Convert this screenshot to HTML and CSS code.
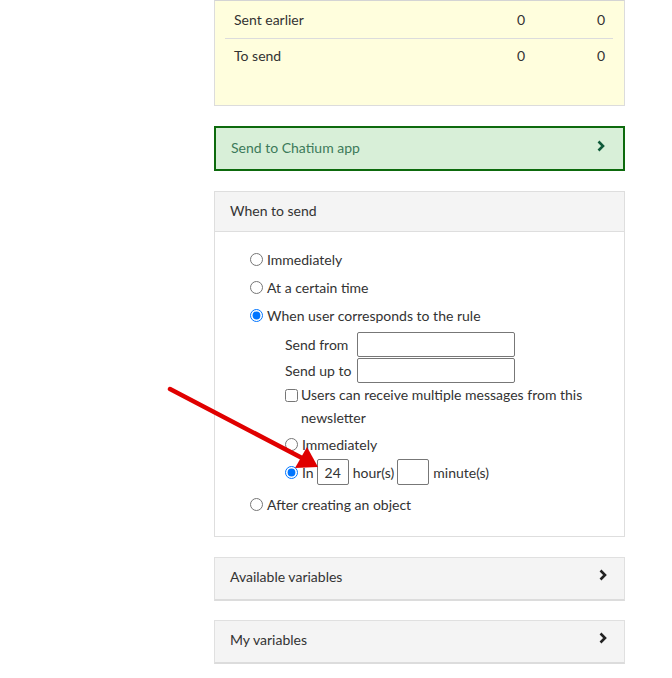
FILE: index.html
```html
<!DOCTYPE html>
<html>
<head>
<meta charset="utf-8">
<link rel="stylesheet" href="styles.css">
</head>
<body>
<div class="column">
  <div class="stats">
    <div class="stat-row"><span class="stat-label">Sent earlier</span><span class="stat-val">0</span><span class="stat-val">0</span></div>
    <div class="stat-row"><span class="stat-label">To send</span><span class="stat-val">0</span><span class="stat-val">0</span></div>
  </div>

  <div class="app-link">
    <span>Send to Chatium app</span>
    <svg class="chev" width="10" height="12" viewBox="0 0 10 12"><path d="M2.5 1.5 L7 6 L2.5 10.5" fill="none" stroke="currentColor" stroke-width="2.6"/></svg>
  </div>

  <div class="panel">
    <div class="panel-head">When to send</div>
    <div class="panel-body">
      <label class="opt"><input type="radio" name="w">Immediately</label>
      <label class="opt"><input type="radio" name="w">At a certain time</label>
      <label class="opt"><input type="radio" name="w" checked>When user corresponds to the rule</label>
      <div class="sub">
        <div class="field"><span class="field-label">Send from</span><input class="text-in wide" type="text"></div>
        <div class="field"><span class="field-label">Send up to</span><input class="text-in wide" type="text"></div>
        <label class="check"><input type="checkbox"><span>Users can receive multiple messages from this newsletter</span></label>
        <label class="opt sub-opt first-sub"><input type="radio" name="t">Immediately</label>
        <div class="opt sub-opt in-row"><input type="radio" name="t" checked>In<input class="text-in small" type="text" value="24">hour(s)<input class="text-in small" type="text">minute(s)</div>
      </div>
      <label class="opt last"><input type="radio" name="w">After creating an object</label>
    </div>
  </div>

  <div class="collapse">
    <span>Available variables</span>
    <svg class="chev" width="10" height="12" viewBox="0 0 10 12"><path d="M2.5 1.5 L7 6 L2.5 10.5" fill="none" stroke="currentColor" stroke-width="2.6"/></svg>
  </div>
  <div class="collapse">
    <span>My variables</span>
    <svg class="chev" width="10" height="12" viewBox="0 0 10 12"><path d="M2.5 1.5 L7 6 L2.5 10.5" fill="none" stroke="currentColor" stroke-width="2.6"/></svg>
  </div>
</div>

<svg class="arrow" width="672" height="678" viewBox="0 0 672 678">
  <line x1="170" y1="389" x2="302" y2="458" stroke="#e00000" stroke-width="4.5" stroke-linecap="round"/>
  <polygon points="318,467 295,468 307,447" fill="#e00000"/>
</svg>
</body>
</html>
```

FILE: styles.css
```css
html, body {
  margin: 0;
  padding: 0;
  background: #fff;
}
body {
  font-family: Lato, "Open Sans", sans-serif;
  font-size: 14px;
  color: #333;
  position: relative;
  width: 672px;
  height: 678px;
  overflow: hidden;
}
.column {
  margin-left: 214px;
  width: 411px;
  display: flex;
  flex-direction: column;
}
.stats {
  background: #fffedd;
  border: 1px solid #dcdcdc;
  border-top: 1px solid #d4d4d4;
  padding: 0 11px 0 10px;
  height: 106px;
  box-sizing: border-box;
}
.stat-row {
  display: flex;
  align-items: center;
  height: 37px;
  padding-left: 9px;
  padding-right: 8px;
  padding-bottom: 1px;
  box-sizing: border-box;
}
.stat-row + .stat-row {
  border-top: 1px solid #dcdcdc;
  height: 35px;
}
.stat-label {
  flex: 1;
}
.stat-val {
  width: 80px;
  text-align: right;
}
.app-link {
  margin-top: 20px;
  height: 45px;
  box-sizing: border-box;
  border: 2px solid #0d6a0d;
  background: #d8efd8;
  color: #3c7a5a;
  display: flex;
  align-items: center;
  justify-content: space-between;
  padding: 0 17px 3px 15px;
}
.app-link .chev {
  color: #0f5a3a;
  margin-top: -3px;
}
.panel {
  margin-top: 20px;
  border: 1px solid #dedede;
}
.panel-head {
  background: #f4f4f4;
  height: 40px;
  box-sizing: border-box;
  border-bottom: 1px solid #dedede;
  display: flex;
  align-items: center;
  padding: 0 0 2px 15px;
}
.panel-body {
  padding: 13px 10px 18px 35px;
  display: flex;
  flex-direction: column;
}
.opt {
  display: flex;
  align-items: center;
  height: 28px;
}
.opt input[type=radio] {
  margin: 0 4px 0 0;
  width: 13px;
  height: 13px;
}
.sub {
  padding-left: 35px;
  margin-top: 2px;
  display: flex;
  flex-direction: column;
}
.field {
  display: flex;
  align-items: center;
  height: 26px;
}
.field-label {
  width: 72px;
}
.text-in {
  font-family: inherit;
  font-size: 14px;
  color: #333;
  border: 1px solid #777;
  border-radius: 2px;
  box-sizing: border-box;
  padding: 0;
  background: #fff;
}
.wide {
  width: 158px;
  height: 25px;
}
.check {
  display: flex;
  align-items: flex-start;
  line-height: 23px;
  margin-top: 0;
}
.check input {
  margin: 6px 3px 0 0;
  width: 13px;
  height: 13px;
}
.sub-opt {
  height: 28px;
}
.first-sub {
  margin-top: 1px;
}
.in-row {
  height: 28px;
}
.in-row .small {
  width: 32px;
  height: 26px;
  text-align: center;
  margin: 0 4px 0 3px;
}
.last {
  margin-top: 4px;
}
.collapse {
  margin-top: 20px;
  height: 44px;
  box-sizing: border-box;
  background: #f4f4f4;
  border: 1px solid #e0e0e0;
  border-bottom: 2px solid #dcdcdc;
  display: flex;
  align-items: center;
  justify-content: space-between;
  padding: 0 16px 4px 15px;
}
.collapse + .collapse {
  margin-top: 19px;
}
.collapse .chev {
  color: #222;
  margin-top: -3px;
}
.arrow {
  position: absolute;
  left: 0;
  top: 0;
  pointer-events: none;
}
```
